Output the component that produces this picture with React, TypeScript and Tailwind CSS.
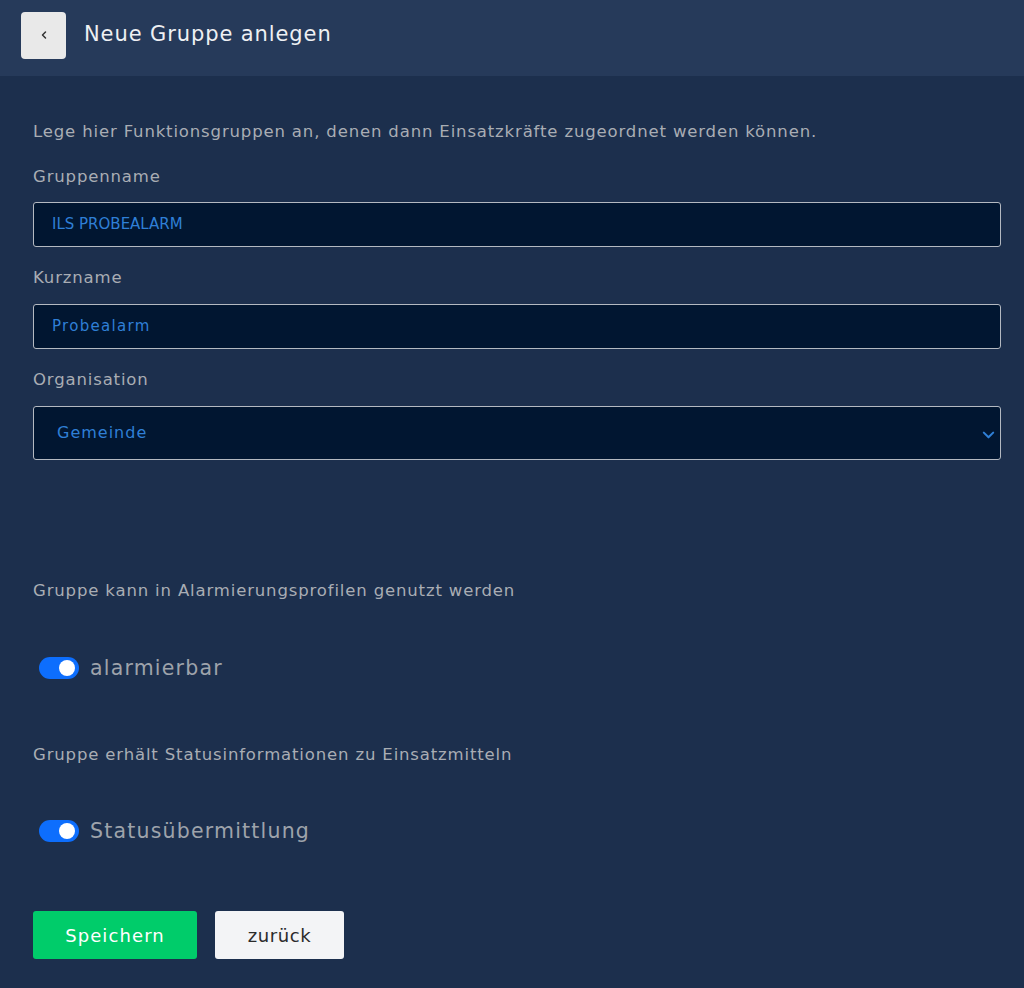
const Toggle = ({ label }: { label: string }) => {
  return (
    <label className="flex items-center h-[28px] gap-[11px] pl-[6px]">
      <span className="relative w-[40px] h-[22px] rounded-full bg-[#0d6efd]">
        <span className="absolute right-[4px] top-[3px] w-[16px] h-[16px] rounded-full bg-white" />
      </span>
      <span className="text-[20.5px] leading-[28px] text-[#9ea3ab] tracking-[1.2px]">{label}</span>
    </label>
  );
};

const App = () => {
  return (
    <div
      className="min-h-[988px] bg-[#1c2f4d] text-[#a9adb4]"
      style={{ fontFamily: '"DejaVu Sans", "Open Sans", sans-serif' }}
    >
      <header className="h-[76px] bg-[#263a5a] flex items-center px-[21px] gap-[18px]">
        <button className="w-[45px] h-[47px] -mt-[6px] rounded bg-[#e9e9e9] flex items-center justify-center">
          <svg viewBox="0 0 24 24" className="w-3 h-3" fill="none" stroke="#333" strokeWidth="3" strokeLinecap="round" strokeLinejoin="round">
            <path d="M15 6l-6 6 6 6" />
          </svg>
        </button>
        <h1 className="text-[21px] text-[#eef0f3] -mt-[7px] tracking-[0.9px]">Neue Gruppe anlegen</h1>
      </header>

      <main className="px-[33px] pt-[44px] text-[16.5px] tracking-[0.85px]">
        <p className="leading-[24px]">
          Lege hier Funktionsgruppen an, denen dann Einsatzkräfte zugeordnet werden können.
        </p>

        <div className="mt-[21px] leading-[24px]">Gruppenname</div>
        <div className="mt-[13px] h-[45px] w-[968px] rounded-[3px] border border-[#b4b9c1] bg-[#011631] flex items-center px-[18px] text-[15px] tracking-[0px] text-[#2f7fd6]">
          ILS PROBEALARM
        </div>

        <div className="mt-[19px] leading-[24px]">Kurzname</div>
        <div className="mt-[14px] h-[45px] w-[968px] rounded-[3px] border border-[#b4b9c1] bg-[#011631] flex items-center px-[18px] text-[15px] tracking-[1.3px] text-[#2f7fd6]">
          Probealarm
        </div>

        <div className="mt-[19px] leading-[24px]">Organisation</div>
        <div className="mt-[14px] h-[54px] w-[968px] rounded-[3px] border border-[#b4b9c1] bg-[#011631] flex items-center justify-between pl-[23px] pr-[4px] text-[16px] tracking-[1px] text-[#2f7fd6]">
          <span>Gemeinde</span>
          <svg viewBox="0 0 16 16" className="w-[15px] h-[15px] mt-[2px]" fill="none" stroke="#2f7fd6" strokeWidth="2.2" strokeLinecap="round" strokeLinejoin="round">
            <path d="M3 6l5 5 5-5" />
          </svg>
        </div>

        <div className="mt-[119px] leading-[24px]">Gruppe kann in Alarmierungsprofilen genutzt werden</div>
        <div className="mt-[51px]">
          <Toggle label="alarmierbar" />
        </div>

        <div className="mt-[61px] leading-[24px]">Gruppe erhält Statusinformationen zu Einsatzmitteln</div>
        <div className="mt-[50px]">
          <Toggle label="Statusübermittlung" />
        </div>

        <div className="mt-[66px] flex gap-[18px] tracking-normal">
          <button className="w-[164px] h-[48px] rounded-[3px] bg-[#00cc6a] text-white text-[18px] tracking-[1.1px]">Speichern</button>
          <button className="w-[129px] h-[48px] rounded-[3px] bg-[#f3f4f6] text-[#2b2b2b] text-[18px] tracking-[0.6px]">zurück</button>
        </div>
      </main>
    </div>
  );
};

export default App;
